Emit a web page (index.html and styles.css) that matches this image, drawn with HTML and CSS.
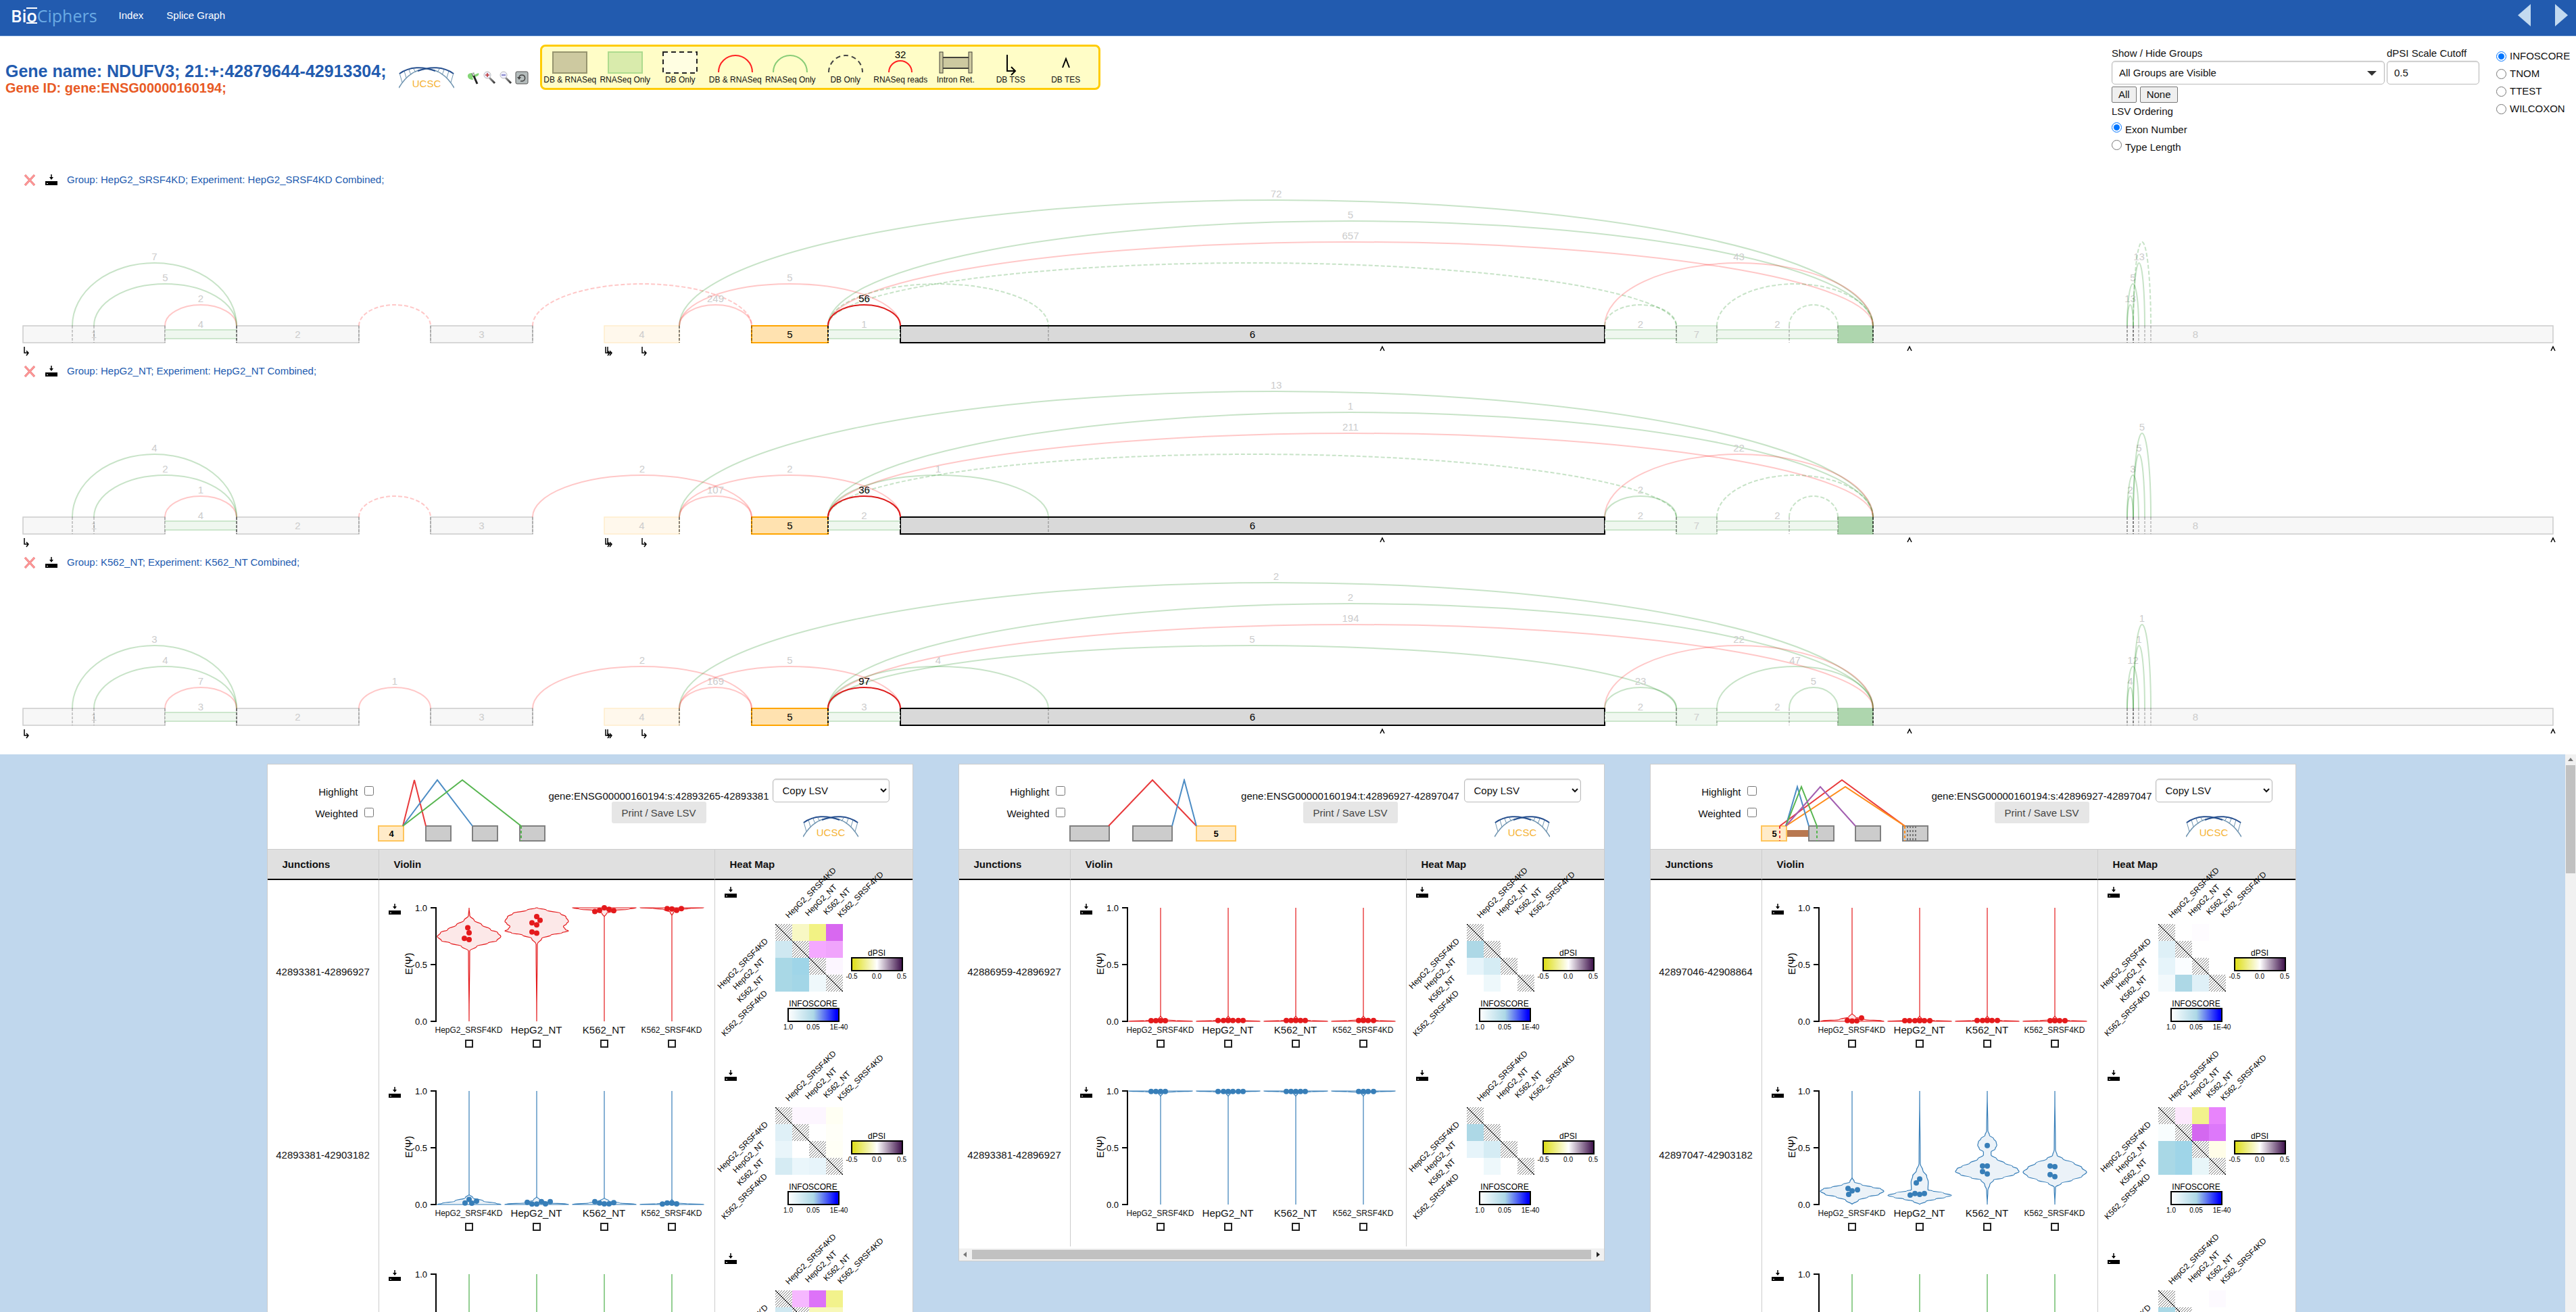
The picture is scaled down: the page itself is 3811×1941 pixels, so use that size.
FILE: index.html
```html
<!DOCTYPE html>
<html lang="en">
<head>
<meta charset="utf-8">
<title>NDUFV3 - BioCiphers Splice Graph</title>
<link rel="stylesheet" href="styles.css">
</head>
<body>
<svg class="defs" width="0" height="0" aria-hidden="true">
  <defs>
    <pattern id="hatch" width="4" height="4" patternUnits="userSpaceOnUse">
      <path d="M-1,1l2,-2M0,4l4,-4M3,5l2,-2" stroke="#777" stroke-width="1"/>
    </pattern>
    <linearGradient id="dpsi-scale">
      <stop offset="0" stop-color="#dddd10"/><stop offset=".5" stop-color="#fff"/><stop offset="1" stop-color="#3b0d48"/>
    </linearGradient>
    <linearGradient id="info-scale">
      <stop offset="0" stop-color="#fff"/><stop offset=".5" stop-color="#add8e6"/><stop offset=".95" stop-color="#00f"/>
    </linearGradient>
    <linearGradient id="lens-handle" x2="1" y2="1">
      <stop offset="0" stop-color="#999"/><stop offset="1" stop-color="#333"/>
    </linearGradient>
    <symbol id="download" viewBox="0 0 18 16">
      <path d="M9,0v5" stroke="#000" stroke-width="1.5"/><path d="M6,4h6l-3,4z"/>
      <rect x="0" y="10" width="18" height="6"/><rect x="2" y="13" width="2" height="1" fill="#fff"/>
    </symbol>
    <symbol id="cross" viewBox="0 0 18 17">
      <path d="M2,1L16,16M16,1L2,16" stroke="#d66" stroke-width="3"/>
      <path d="M2,1L16,16M16,1L2,16" stroke="#f99" stroke-width="2"/>
    </symbol>
    <symbol id="ucsc" viewBox="0 0 82 33">
      <g fill="none" stroke="#6f94b0">
        <path d="M0,32C12,12 27,4 42,4" stroke-width="1.5"/><path d="M82,32C70,12 55,4 40,4" stroke-width="1.5"/>
        <path d="M1,10l4,14M8,7l3,10M15,5l3,8M22,4l3,5M81,10l-4,14M74,7l-3,10M67,5l-3,8M60,4l-3,5"/>
      </g>
      <path d="M1,11C16,0 36,0 54,7M81,11C66,0 46,0 28,7" fill="none" stroke="#27508f" stroke-width="2"/>
      <text x="41" y="31" text-anchor="middle" class="ucsc-word">UCSC</text>
    </symbol>
  </defs>
</svg>

<header class="topbar">
  <a href="#" class="logo"><b>Bi<span class="ring">o</span></b>Ciphers</a>
  <nav><a href="#">Index</a><a href="#">Splice Graph</a></nav>
  <div class="pager">
    <button aria-label="Previous gene"><svg width="19" height="33"><path d="M19,0V33L0,16.500z"/></svg></button>
    <button aria-label="Next gene"><svg width="19" height="33"><path d="M0,0V33L19,16.500z"/></svg></button>
  </div>
</header>

<section class="gene">
  <div class="title">
    <h1>Gene name: NDUFV3; 21:+:42879644-42913304;</h1>
    <h2>Gene ID: gene:ENSG00000160194;</h2>
  </div>
  <a href="#" class="ucsc-link" aria-label="UCSC genome browser"><svg width="82" height="33"><use href="#ucsc"/></svg></a>
  <div class="tools">
    <button aria-label="Toggle scale"><svg width="20" height="20" viewBox="0 0 20 20"><path d="M2,6c3,-5 7,-1 10,-4l-1,4l7,-3c2,4 -4,6 -9,6l1,4c-4,0 -8,-2 -8,-5z" fill="#6c5" opacity=".8"/><path d="M9,3l7,16" stroke="#222" stroke-width="3"/><path d="M9,3l2,4" stroke="#ddd" stroke-width="2"/></svg></button>
    <button aria-label="Zoom in"><svg width="20" height="20" viewBox="0 0 20 20"><path d="M10,10l8,8" stroke="url(#lens-handle)" stroke-width="3"/><circle cx="7" cy="6" r="5" fill="#eef" stroke="#bbb"/><path d="M4,6h6M7,3v6" stroke="#b33" stroke-width="1.500"/></svg></button>
    <button aria-label="Zoom out"><svg width="20" height="20" viewBox="0 0 20 20"><path d="M10,10l8,8" stroke="url(#lens-handle)" stroke-width="3"/><circle cx="7" cy="6" r="5" fill="#eef" stroke="#bbb"/><path d="M4,6h6" stroke="#66b" stroke-width="1.500"/></svg></button>
    <button aria-label="Reset zoom"><svg width="20" height="20" viewBox="0 0 20 20"><rect x="1" y="1" width="18" height="18" rx="2" fill="#b4bcbc" stroke="#555"/><path d="M8,15h3c5,-1 5,-9 -1,-9c-3,0 -4,2 -4,4" fill="none" stroke="#444" stroke-width="1.500"/><path d="M3,9h6l-3,4z" fill="#444"/></svg></button>
  </div>
  <div class="legend">
    <div><svg viewBox="0 0 60 42"><rect x="5" y="8" width="50" height="31" fill="#cdc9a0" stroke="#96946f" stroke-width="2"/></svg>DB &amp; RNASeq</div>
    <div><svg viewBox="0 0 60 42"><rect x="5" y="8" width="50" height="31" fill="#d9ebac" stroke="#addb8e" stroke-width="2"/></svg>RNASeq Only</div>
    <div><svg viewBox="0 0 60 42"><rect x="5" y="8" width="50" height="31" fill="#fffee2" stroke="#222" stroke-width="2" stroke-dasharray="7 5"/></svg>DB Only</div>
    <div><svg viewBox="0 0 60 42"><path d="M5,38A25,25 0 0 1 55,38" fill="none" stroke="#f22" stroke-width="2"/></svg>DB &amp; RNASeq</div>
    <div><svg viewBox="0 0 60 42"><path d="M5,38A25,25 0 0 1 55,38" fill="none" stroke="#8c7" stroke-width="2"/></svg>RNASeq Only</div>
    <div><svg viewBox="0 0 60 42"><path d="M5,38A25,25 0 0 1 55,38" fill="none" stroke="#444" stroke-width="2" stroke-dasharray="7 5"/></svg>DB Only</div>
    <div><svg viewBox="0 0 60 42"><path d="M13,38A17,17 0 0 1 47,38" fill="none" stroke="#f22" stroke-width="2"/><text x="30" y="17" text-anchor="middle" class="reads">32</text></svg>RNASeq reads</div>
    <div><svg viewBox="0 0 60 42"><g fill="#cdc9a0" stroke="#44433a"><rect x="8" y="16" width="44" height="16" stroke-width="2"/><rect x="6" y="8" width="5" height="31"/><rect x="49" y="8" width="5" height="31"/></g></svg>Intron Ret.</div>
    <div><svg viewBox="0 0 60 42"><path d="M25,12V36H36M31,30l6,6l-6,6" fill="none" stroke="#000" stroke-width="2"/></svg>DB TSS</div>
    <div><svg viewBox="0 0 60 42"><path d="M25,31L30,18L35,31" fill="none" stroke="#000" stroke-width="2"/></svg>DB TES</div>
  </div>
  <form class="filters">
    <div class="main-filters">
      <div class="fields">
        <div class="field wide"><label for="groups">Show / Hide Groups</label>
          <div class="select-box"><select id="groups"><option>All Groups are Visible</option></select></div></div>
        <div class="field"><label for="cutoff">dPSI Scale Cutoff</label><input type="text" id="cutoff" value="0.5"></div>
      </div>
      <div class="pick"><button type="button">All</button><button type="button">None</button></div>
      <div class="ordering-title">LSV Ordering</div>
      <label class="order"><input type="radio" name="order" checked><span>Exon Number</span></label>
      <label class="order"><input type="radio" name="order"><span>Type Length</span></label>
    </div>
    <div class="stats">
      <label><input type="radio" name="stat" checked>INFOSCORE</label>
      <label><input type="radio" name="stat">TNOM</label>
      <label><input type="radio" name="stat">TTEST</label>
      <label><input type="radio" name="stat">WILCOXON</label>
    </div>
  </form>
</section>

<main class="graphs">
  <section class="graph">
    <div class="graph-head"><button aria-label="Remove"><svg width="18" height="17"><use href="#cross"/></svg></button><button aria-label="Download"><svg width="18" height="16"><use href="#download"/></svg></button><p>Group: HepG2_SRSF4KD; Experiment: HepG2_SRSF4KD Combined;</p></div>
    <svg class="splice"></svg>
  </section>
  <section class="graph">
    <div class="graph-head"><button aria-label="Remove"><svg width="18" height="17"><use href="#cross"/></svg></button><button aria-label="Download"><svg width="18" height="16"><use href="#download"/></svg></button><p>Group: HepG2_NT; Experiment: HepG2_NT Combined;</p></div>
    <svg class="splice"></svg>
  </section>
  <section class="graph">
    <div class="graph-head"><button aria-label="Remove"><svg width="18" height="17"><use href="#cross"/></svg></button><button aria-label="Download"><svg width="18" height="16"><use href="#download"/></svg></button><p>Group: K562_NT; Experiment: K562_NT Combined;</p></div>
    <svg class="splice"></svg>
  </section>
</main>

<div class="lsv-panel">
  <div class="cards">
    <article class="card">
      <div class="card-head">
        <div class="toggles"><label>Highlight<input type="checkbox"></label><label>Weighted<input type="checkbox"></label></div>
        <svg class="cartoon" viewBox="0 0 250 94" width="250" height="94">
          <g class="exon"><rect x="71" y="70" width="37" height="22"/><rect x="140" y="70" width="37" height="22"/><rect x="210" y="70" width="37" height="22"/></g>
          <rect class="ref" x="1" y="70" width="37" height="22"/><text x="20" y="86">4</text>
          <path class="red" d="M37,70L54,2L71,70"/><path class="blue" d="M37,70L88,2L140,70"/><path class="green" d="M37,70L125,2L212,70"/>
          <path class="green" stroke-dasharray="4 3" d="M212,70V92"/>
        </svg>
        <div class="lsv-id"><span>gene:ENSG00000160194:s:42893265-42893381</span><button>Print / Save LSV</button></div>
        <div class="lsv-copy"><select aria-label="Copy LSV"><option>Copy LSV</option></select><a href="#" aria-label="UCSC genome browser"><svg width="82" height="33"><use href="#ucsc"/></svg></a></div>
      </div>
      <table><thead><tr><th>Junctions</th><th>Violin</th><th>Heat Map</th></tr></thead><tbody></tbody></table>
    </article>
    <article class="card">
      <div class="card-head">
        <div class="toggles"><label>Highlight<input type="checkbox"></label><label>Weighted<input type="checkbox"></label></div>
        <svg class="cartoon" viewBox="0 0 250 94" width="250" height="94">
          <g class="exon"><rect x="1" y="70" width="58" height="22"/><rect x="94" y="70" width="58" height="22"/></g>
          <rect class="ref" x="188" y="70" width="58" height="22"/><text x="217" y="86">5</text>
          <path class="red" d="M58,70L123,2L188,70"/><path class="blue" d="M152,70L170,2L188,70"/>
        </svg>
        <div class="lsv-id"><span>gene:ENSG00000160194:t:42896927-42897047</span><button>Print / Save LSV</button></div>
        <div class="lsv-copy"><select aria-label="Copy LSV"><option>Copy LSV</option></select><a href="#" aria-label="UCSC genome browser"><svg width="82" height="33"><use href="#ucsc"/></svg></a></div>
      </div>
      <table><thead><tr><th>Junctions</th><th>Violin</th><th>Heat Map</th></tr></thead><tbody></tbody></table>
      <div class="hbar"><i class="left"></i><i class="thumb"></i><i class="right"></i></div>
    </article>
    <article class="card">
      <div class="card-head">
        <div class="toggles"><label>Highlight<input type="checkbox"></label><label>Weighted<input type="checkbox"></label></div>
        <svg class="cartoon" viewBox="0 0 250 94" width="250" height="94">
          <rect x="38" y="76" width="33" height="10" fill="#b87850"/>
          <g class="exon"><rect x="71" y="70" width="37" height="22"/><rect x="140" y="70" width="37" height="22"/><rect x="210" y="70" width="37" height="22"/></g>
          <rect class="ref" x="1" y="70" width="37" height="22"/><text x="20" y="86">5</text>
          <path class="red" d="M28,70L120,2L213,70"/><path class="orange" d="M37,70L125,12L213,70"/><path class="blue" d="M37,70L54,12L71,70"/><path class="green" d="M37,70L60,12L83,70"/><path class="purple" d="M37,70L88,12L140,70"/>
          <path class="red" stroke-dasharray="4 3" d="M28,70V92"/><path class="green" stroke-dasharray="4 3" d="M83,70V92"/><path class="orange" stroke-dasharray="4 3" d="M213,70V92"/>
          <path stroke="#777" stroke-dasharray="3 3" d="M217,70V92M221,70V92M225,70V92M229,70V92"/>
        </svg>
        <div class="lsv-id"><span>gene:ENSG00000160194:s:42896927-42897047</span><button>Print / Save LSV</button></div>
        <div class="lsv-copy"><select aria-label="Copy LSV"><option>Copy LSV</option></select><a href="#" aria-label="UCSC genome browser"><svg width="82" height="33"><use href="#ucsc"/></svg></a></div>
      </div>
      <table><thead><tr><th>Junctions</th><th>Violin</th><th>Heat Map</th></tr></thead><tbody></tbody></table>
    </article>
  </div>
  <div class="vbar"><i class="up"></i><i class="thumb"></i></div>
</div>
<script src="plots.js"></script>
</body>
</html>
```
FILE: styles.css
```css
* { box-sizing: border-box; }
html, body { height: 100%; }
body {
  margin: 0;
  display: flex;
  flex-direction: column;
  overflow: hidden;
  background: #fff;
  color: #111;
  font: 15px/18px "Liberation Sans", Arial, sans-serif;
}
button, select, input { font: inherit; color: inherit; }
button { padding: 0; cursor: pointer; }
h1, h2, p { margin: 0; }
svg { display: block; flex: none; }
.defs { position: absolute; }
.ucsc-word { font: 15px "Liberation Sans", sans-serif; fill: #f5b335; stroke: none; }

/* top bar */
.topbar {
  flex: none;
  display: flex;
  align-items: center;
  height: 54px;
  padding: 0 12px 8px 16px;
  background: #225baf;
  border-bottom: 1px solid #c9dcf2;
}
.logo { color: #6aaae4; font: 25px/30px "Open Sans", sans-serif; text-decoration: none; }
.logo b { color: #fff; font-weight: 600; }
.ring { border-top: 2px solid #fff; border-bottom: 2px solid #fff; line-height: 20px; display: inline-block; }
.topbar nav { display: flex; gap: 34px; margin-left: 32px; }
.topbar nav a { color: #fff; text-decoration: none; }
.pager { display: flex; gap: 36px; margin-left: auto; }
.pager button { border: 0; background: none; }
.pager svg { fill: #c3daf0; }

/* gene summary */
.gene { flex: none; display: flex; align-items: flex-start; height: 202px; padding-top: 12px; }
.title { padding: 25px 0 0 8px; }
h1 { font-size: 25px; line-height: 28px; color: #225baf; }
h2 { font-size: 20px; line-height: 22px; color: #e85a25; }
.ucsc-link { margin: 32px 0 0 18px; }
.tools { display: flex; gap: 4px; margin: 39px 0 0 18px; }
.tools button { border: 0; background: none; }
.legend {
  flex: none;
  display: grid;
  grid-template-columns: repeat(10, 1fr);
  width: 829px;
  margin-left: 17px;
  padding: 0 7px 5px 1px;
  border: 3px solid #fc0;
  border-radius: 8px;
  background: #fffdc7;
  font-size: 12px;
  line-height: 14px;
  text-align: center;
  white-space: nowrap;
}
.legend > div { display: flex; flex-direction: column; align-items: center; }
.legend svg { width: 60px; height: 42px; overflow: visible; }
.reads { font-size: 15px; }

/* filters */
.filters { display: flex; gap: 25px; margin-left: auto; padding-top: 4px; width: 687px; }
.main-filters { flex: 1; display: flex; flex-direction: column; }
.fields { display: flex; gap: 3px; }
.field { display: flex; flex-direction: column; gap: 2px; width: 137px; }
.field.wide { flex: 1; }
.field input, .select-box select, .lsv-copy select {
  width: 100%;
  height: 35px;
  padding: 0 10px;
  border: 1px solid #bbb;
  border-radius: 5px;
  background: #fff;
  box-shadow: inset 0 1px 2px #ddd;
}
.select-box { position: relative; }
.select-box select { appearance: none; }
.select-box::after {
  content: "";
  position: absolute;
  right: 12px;
  top: 15px;
  border: 7px solid transparent;
  border-top-color: #333;
  border-bottom: 0;
}
.pick { display: flex; gap: 5px; margin-top: 3px; }
.pick button { height: 24px; padding: 0 9px; border: 1px solid #767676; border-radius: 2px; background: #efefef; }
.ordering-title { margin: 4px 0 7px; }
input[type=radio] { width: 15px; height: 15px; margin: 0; }
.order { display: flex; gap: 5px; height: 26px; }
.order span { padding-top: 2px; }
.stats { width: 118px; }
.stats label { display: flex; align-items: center; gap: 5px; height: 26px; }

/* splice graphs */
.graphs { flex: none; padding-bottom: 11px; }
.graph-head { display: flex; align-items: center; height: 20px; padding-left: 35px; color: #225baf; }
.graph-head button { border: 0; background: none; margin-right: 14px; color: #000; }
.splice { width: 100%; height: 263px; overflow: visible; }
.splice text { font-size: 15px; text-anchor: middle; fill: #ccc; }
.splice text.on { fill: #000; }

/* LSV cards */
.lsv-panel { flex: 1; min-height: 0; display: flex; overflow: hidden; background: #c0d7ed; }
.cards { flex: 1; display: flex; flex-wrap: wrap; justify-content: center; align-items: flex-start; gap: 67px; padding: 14px 4px 0 0; }
.card { width: 956px; background: #fff; border: 1px solid #ccc; }
.card-head { display: flex; height: 125px; }
.toggles { width: 157px; display: flex; flex-direction: column; gap: 15px; padding-top: 32px; }
.toggles label { display: flex; justify-content: flex-end; align-items: baseline; gap: 9px; line-height: 17px; }
.toggles input { width: 14px; height: 14px; margin: 0; }
.cartoon { margin: 21px 3px 0 6px; }
.cartoon path { fill: none; stroke-width: 2; }
.cartoon .exon rect { fill: #ccc; stroke: #808080; stroke-width: 2; }
.cartoon .ref { fill: #ffebc9; stroke: #ffc55c; stroke-width: 2; }
.cartoon text { font-size: 13px; font-weight: bold; text-anchor: middle; }
.red { stroke: #e83a3c; }
.blue { stroke: #4c8cc4; }
.green { stroke: #57b550; }
.purple { stroke: #a35fb0; }
.orange { stroke: #ff8c1a; }
.lsv-id { width: 326px; display: flex; flex-direction: column; align-items: center; padding-top: 38px; line-height: 17px; white-space: nowrap; }
.lsv-id button { width: 140px; height: 32px; border: 0; border-radius: 3px; background: #e6e6e6; color: #444; }
.lsv-copy { width: 173px; margin-left: 5px; padding-top: 21px; display: flex; flex-direction: column; align-items: center; gap: 19px; }
table { width: 100%; border-collapse: separate; border-spacing: 0; table-layout: fixed; }
th { height: 46px; padding: 0 0 0 22px; text-align: left; background: #e0e0e0; border-top: 1px solid #ccc; border-bottom: 2px solid #000; }
th:nth-child(1) { width: 164px; }
th:nth-child(2) { width: 497px; }
td { height: 271px; padding: 0; vertical-align: top; }
th + th, td + td { border-left: 1px solid #ccc; }
td.junction { text-align: center; vertical-align: middle; }
.violin, .heat { overflow: visible; }
.violin text { font-size: 13px; text-anchor: end; }
.violin text.axis-title { font-size: 15px; text-anchor: start; }
.violin-labels { display: grid; grid-template-columns: repeat(4, 100px); margin-left: 83px; }
.violin-labels label { display: flex; flex-direction: column; align-items: center; gap: 5px; white-space: nowrap; }
.violin-labels .long { font-size: 12px; }
.violin-labels input { appearance: none; width: 12px; height: 12px; margin: 0; border: 2px solid #222; background: #fff; }
.heat text { font-size: 12px; }
.heat .mid { text-anchor: middle; }
.heat .end { text-anchor: end; }
.heat .tick { font-size: 10px; text-anchor: middle; }

/* scrollbars */
.hbar, .vbar { display: flex; background: #f1f1f1; }
.hbar { height: 18px; margin-top: 3px; align-items: center; padding: 0 6px; gap: 8px; }
.vbar { flex: none; width: 16px; flex-direction: column; align-items: center; padding-top: 5px; gap: 6px; }
.hbar .thumb { flex: 1; height: 14px; background: #c1c1c1; }
.vbar .thumb { width: 14px; height: 160px; background: #c1c1c1; }
.left, .right, .up { border: 4px solid transparent; }
.left { border-right: 5px solid #777; border-left: 0; }
.right { border-left: 5px solid #222; border-right: 0; }
.up { border-bottom: 5px solid #777; border-top: 0; }
```
FILE: plots.js
```js
// ---------- splice graphs ----------
const GENE_SPAN = 3811;
const BASE = 206, EXON_H = 25, STEP = 31;
const EXONS = [
  [34, 244, '1', '#f7f7f7', '#ccc'], [350, 531, '2', '#f7f7f7', '#ccc'], [637, 788, '3', '#f7f7f7', '#ccc'],
  [894, 1005, '4', '#fff8ec', '#ffedcc'], [2719, 3777, '8', '#f7f7f7', '#ccc'],
  [2480, 2540, '7', '#eff7ef', '#cce5cc'], [1112, 1225, '5', '#ffe2b0', '#ffa500', 1], [1332, 2374, '6', '#d9d9d9', '#000', 1]
];
const INTRONS = [[244, 350], [1225, 1332], [2374, 2480], [2540, 2719]];
// start, end, level, colour, reads per group ('' = annotated only, drawn dashed)
const JUNCTIONS = [
  [107, 350, 3, 'g', '7', '4', '3'], [139, 350, 2, 'g', '5', '2', '4'], [244, 350, 1, 'r', '2', '1', '7'],
  [531, 637, 1, 'r', '', '', '1'], [788, 1112, 2, 'r', '', '2', '2'], [1005, 1112, 1, 'r', '249', '107', '169'],
  [1005, 1332, 2, 'r', '5', '2', '5'], [1005, 2771, 6, 'g', '72', '13', '2'], [1225, 2771, 5, 'g', '5', '1', '2'],
  [1225, 2771, 4, 'r', '657', '211', '194'], [1225, 2480, 3, 'g', '', '', '5'], [1225, 1551, 2, 'g', '', '1', '4'],
  [2374, 2771, 3, 'r', '43', '22', '22'], [2374, 2480, 1, 'g', '', '2', '23'], [2540, 2771, 2, 'g', '', '', '47'],
  [2647, 2719, 1, 'g', '', '', '5'], [3147, 3156, 1, 'g', '13', '2', '4'], [3147, 3164, 2, 'g', '5', '3', '12'],
  [3156, 3173, 3, 'g', '13', '5', '1'], [3156, 3182, 4, 'g', '', '5', '1'], [1225, 1332, 1, 'on', '56', '36', '97']
];
const INTRON_READS = [['4', '1', '2', '2'], ['4', '2', '2', '2'], ['3', '3', '2', '2']];
const STROKE = { g: 'rgba(0,128,0,.22)', r: 'rgba(255,0,0,.22)', on: '#dd1c1c' };

function drawSplice(svg, group) {
  const k = svg.clientWidth / GENE_SPAN;
  let out = '';
  EXONS.forEach(([a, b, name, fill, stroke, on]) => {
    out += `<rect x="${a * k}" y="${BASE}" width="${(b - a) * k}" height="${EXON_H}" fill="${fill}" stroke="${stroke}" stroke-width="${on ? 2 : 1.5}"/>`;
    out += `<text class="${on ? 'on' : ''}" x="${(a + b) / 2 * k}" y="${BASE + 18}">${name}</text>`;
  });
  out += `<rect x="${2719 * k}" y="${BASE}" width="${52 * k}" height="${EXON_H}" fill="#aed6ae" stroke="#9c9"/>`;
  INTRONS.forEach(([a, b], i) => {
    out += `<rect x="${a * k}" y="${BASE + 6}" width="${(b - a) * k}" height="13" fill="#eff7ef"/>`;
    out += `<path d="M${a * k},${BASE + 6}H${b * k}M${a * k},${BASE + 19}H${b * k}" stroke="#cce6cc" stroke-width="2"/>`;
    out += `<text x="${(a + b) / 2 * k}" y="${BASE + 3}">${INTRON_READS[group][i]}</text>`;
  });
  JUNCTIONS.forEach(([a, b, level, kind, ...reads]) => {
    const r = reads[group], on = kind === 'on', h = level * STEP, rx = (b - a) / 2 * k;
    out += `<path d="M${a * k},${BASE}A${rx},${h} 0 0 1 ${b * k},${BASE}" fill="none" stroke="${STROKE[kind]}" stroke-width="2" ${r ? '' : 'stroke-dasharray="6 3"'}/>`;
    out += `<path d="M${a * k},${BASE}v${EXON_H}M${b * k},${BASE}v${EXON_H}" stroke="#000" stroke-opacity="${on ? 1 : .25}" stroke-width="1.5" stroke-dasharray="4 2"/>`;
    if (r) out += `<text class="${on ? 'on' : ''}" x="${(a + b) / 2 * k}" y="${BASE - h - 4}">${r}</text>`;
  });
  [36, 896, 899, 950].forEach(x => {
    out += `<path d="M${x * k},237v9h5m-2,-3l3,3l-3,4" fill="none" stroke="#000" stroke-width="1.5"/>`;
  });
  [2045, 2825, 3777].forEach(x => {
    out += `<path d="M${x * k - 3},243l3,-6l3,6" fill="none" stroke="#000" stroke-width="1.5"/>`;
  });
  svg.innerHTML = out;
}
function drawAll() { document.querySelectorAll('.splice').forEach(drawSplice); }
drawAll();
window.addEventListener('resize', drawAll);

// ---------- violins ----------
const GROUPS = ['HepG2_SRSF4KD', 'HepG2_NT', 'K562_NT', 'K562_SRSF4KD'];
const Y1 = 41, Y0 = 209, HALF = 47;
const yOf = psi => Y0 - psi * (Y0 - Y1);
const LOW = [[1, 0], [.05, 0], [.015, .08], [.006, .5], [.003, 1], [0, 1]];
const HIGH = LOW.map(([p, w]) => [1 - p, w]).reverse();
const LINE = [[1, 0], [0, 0]];
const row = (xs, p) => xs.map(x => [x, p]);

function violin(cx, profile, dots, colour) {
  const side = s => profile.map(([p, w]) => [cx + s * (w > .01 ? w : 0) * HALF, yOf(p)]);
  const smooth = pts => pts.slice(1).map((p, i) => {
    const q = pts[i], m = (q[1] + p[1]) / 2;
    return `C${q[0]},${m} ${p[0]},${m} ${p[0]},${p[1]}`;
  }).join('');
  const right = side(1), left = side(-1).reverse();
  return `<path d="M${right[0]}${smooth(right)}L${left[0]}${smooth(left)}Z" fill="${colour}" fill-opacity=".1" stroke="${colour}" stroke-width="1.2"/>` +
    dots.map(([x, p]) => `<circle cx="${cx + x}" cy="${yOf(p)}" r="4" fill="${colour}"/>`).join('');
}
function violinCell(data, colour) {
  let s = `<svg class="violin" width="496" height="213"><use href="#download" x="14" y="35" width="18" height="16"/>`;
  s += `<path d="M76,${Y1}h8V${Y0}h-8M76,${(Y0 + Y1) / 2}h8" fill="none" stroke="#000" stroke-width="2"/>`;
  s += `<text x="71" y="${Y1 + 5}">1.0</text><text x="71" y="${(Y0 + Y1) / 2 + 5}">0.5</text><text x="71" y="${Y0 + 5}">0.0</text>`;
  s += `<text class="axis-title" transform="translate(49 140) rotate(-90)">E(Ψ)</text>`;
  data.forEach(([profile, dots], i) => { s += violin(133 + i * 100, profile, dots, colour); });
  s += '</svg><div class="violin-labels">';
  GROUPS.forEach(g => { s += `<label><span class="${g.length > 10 ? 'long' : ''}">${g}</span><input type="checkbox"></label>`; });
  return s + '</div>';
}

// ---------- heat maps ----------
const COLS = [[109, 57], [138, 54], [165, 52], [186, 56]];
const ROWS = [[79, 91], [74, 120], [73, 146], [78, 168]];
function heatCell(m) {
  let s = '<svg class="heat" width="293" height="250"><use href="#download" x="14" y="10" width="18" height="16"/>';
  m.forEach((colour, i) => {
    const r = Math.floor(i / 4), c = i % 4;
    s += `<rect x="${89 + c * 25}" y="${65 + r * 25}" width="25" height="25" fill="${r === c ? 'url(#hatch)' : colour}"/>`;
  });
  s += '<path d="M89,65l100,100" stroke="#000"/>';
  GROUPS.forEach((g, i) => {
    s += `<text transform="translate(${COLS[i]}) rotate(-45)">${g}</text>`;
    s += `<text class="end" transform="translate(${ROWS[i]}) rotate(-45)">${g}</text>`;
  });
  s += '<text class="mid" x="239" y="112">dPSI</text><rect x="202" y="115" width="75" height="19" fill="url(#dpsi-scale)" stroke="#000" stroke-width="2"/>';
  s += '<text class="tick" x="202" y="146">-0.5</text><text class="tick" x="239" y="146">0.0</text><text class="tick" x="276" y="146">0.5</text>';
  s += '<text class="mid" x="145" y="187">INFOSCORE</text><rect x="108" y="190" width="75" height="19" fill="url(#info-scale)" stroke="#000" stroke-width="2"/>';
  s += '<text class="tick" x="108" y="221">1.0</text><text class="tick" x="145" y="221">0.05</text><text class="tick" x="183" y="221">1E-40</text>';
  return s + '</svg>';
}

const W = '#fff', RED = '#e41a1c', BLUE = '#377eb8', GREEN = '#4daf4a';
const THIN = GROUPS.map(() => [LINE, []]);
const CARDS = [
  [
    ['42893381-42896927', RED, [
      [[[1, .01], [.93, .02], [.89, .16], [.85, .4], [.81, .67], [.78, .9], [.747, 1], [.71, .87], [.69, .6], [.66, .24], [.62, .02], [0, .01]], [[-2, .824], [0, .78], [-7, .73], [0, .72]]],
      [[[1, .02], [.98, .3], [.95, .75], [.92, .92], [.88, 1], [.86, .94], [.835, .84], [.81, .9], [.796, 1], [.78, .8], [.76, .45], [.73, .16], [.68, .02], [0, .01]], [[0, .922], [5, .89], [-7, .868], [0, .85], [-7, .787], [0, .777]]],
      [[[1, 1], [.99, .8], [.975, .3], [.95, .07], [.92, .01], [0, .01]], [[-14, .968], [-7, .978], [0, 1], [7, .986], [14, .974]]],
      [[[1, 1], [.995, .6], [.985, .25], [.96, .05], [.93, .01], [0, .01]], [[-7, .992], [0, .99], [7, .978], [14, .992]]]
    ], ['', '#f8f8c4', '#f2f284', '#d868f0', '#cfe8f1', '', '#f4a8ff', '#f0a4fc', '#a9d8e6', '#9fd5e8', '', '#fcf6ff', '#a9d8e6', '#a3d6e7', '#eff8fb', '']],
    ['42893381-42903182', BLUE, [
      [[[1, .01], [.09, .01], [.06, .12], [.03, .45], [.01, .85], [0, 1]], [[-6, .014], [0, .045], [4, .012], [11, .03]]],
      [[[1, .01], [.07, .01], [.04, .1], [.015, .35], [.004, .95], [0, 1]], [[-14, .02], [-7, .004], [0, .004], [7, .025], [13, .006], [20, .025]]],
      [[[1, .01], [.06, .01], [.03, .15], [.012, .5], [.004, .95], [0, 1]], [[-14, .025], [-7, .014], [0, .006], [7, .006], [14, .016]]],
      [LOW, [[-14, .004], [-7, .014], [0, .012], [7, .006]]]
    ], ['', '#fdf6ff', '#fdf6ff', '#fffff3', '#dff0f7', '', W, '#fffff8', '#e9f5fa', W, '', '#fffff6', '#d5ebf3', '#eaf6fb', '#e7f4fa', '']],
    ['42893381-42908864', GREEN, THIN, ['', '#f6b8ff', '#dd72f8', '#f2f28c', '#cfe8f1', '', '#f8f8b8', '#f8f8b8', '#cfe8f1', '#cfe8f1', '', W, W, W, W, '']]
  ],
  [
    ['42886959-42896927', RED, [
      [LOW, row([-14, -7, 0, 7], .006)], [LOW, row([-15, -7, 0, 7, 15, 22], .008)], [LOW, row([-14, -7, 0, 7, 14], .007)], [LOW, row([-7, 0, 7, 15], .007)]
    ], ['', W, W, W, '#add8e6', '', W, W, '#e6f4fa', '#d5ecf4', '', W, W, '#eef8fb', W, '']],
    ['42893381-42896927', BLUE, [
      [HIGH, row([-14, -7, 0, 7], .995)], [HIGH, row([-15, -7, 0, 7, 15, 22], .995)], [HIGH, row([-14, -7, 0, 7, 14], .995)], [HIGH, row([-7, 0, 7, 15], .995)]
    ], ['', W, W, W, '#add8e6', '', W, W, '#e6f4fa', '#d5ecf4', '', W, W, '#eef8fb', W, '']]
  ],
  [
    ['42897046-42908864', RED, [
      [[[1, .01], [.07, .01], [.04, .1], [.015, .4], [.004, .95], [0, 1]], [[-7, .008], [0, .003], [7, .004], [14, .03]]],
      [LOW, row([-22, -15, -7, 0, 7, 15], .006)], [LOW, row([-15, -7, 0, 7, 15], .007)], [LOW, row([-7, 0, 7, 15], .006)]
    ], ['', W, '#fefcff', W, '#def0f7', '', W, W, '#e6f4fa', '#fafdff', '', W, '#f2f9fc', '#add8e6', '#dff0f7', '']],
    ['42897047-42903182', BLUE, [
      [[[1, .01], [.24, .01], [.2, .07], [.175, .3], [.15, .65], [.14, .9], [.117, 1], [.09, .85], [.067, .5], [.038, .2], [0, .01]], [[-6, .142], [8, .13], [0, .12], [-5, .09]]],
      [[[1, .01], [.36, .02], [.3, .1], [.25, .22], [.2, .27], [.13, .26], [.12, .4], [.103, .75], [.08, 1], [.063, .8], [.048, .5], [.028, .2], [0, .01]], [[0, .224], [-5, .19], [-7, .097], [0, .089], [7, .097], [-14, .083]]],
      [[[1, .01], [.65, .02], [.61, .07], [.58, .2], [.55, .28], [.523, .3], [.49, .25], [.463, .12], [.437, .12], [.4, .3], [.364, .55], [.335, .8], [.315, .95], [.29, 1], [.265, .85], [.235, .5], [.216, .2], [.176, .08], [.127, .02], [0, .01]], [[0, .52], [-7, .339], [0, .339], [-7, .29], [0, .27]]],
      [[[1, .01], [.483, .02], [.434, .07], [.404, .25], [.364, .6], [.325, .85], [.285, 1], [.245, .85], [.216, .55], [.186, .2], [.152, .02], [0, .01]], [[-7, .34], [0, .333], [-7, .264], [0, .245]]]
    ], ['', '#fce8fc', '#f2f28c', '#e884fc', '#f8fdfe', '', '#d468f0', '#dd78fa', '#a9d8e6', '#9fd5e8', '', '#fffde8', '#a9d8e6', '#9fd5e8', '#e8f6f9', '']],
    ['42897047-42908864', GREEN, THIN, ['', W, W, '#fdfaff', '#a9d8e6', '', W, W, W, W, '', W, W, W, W, '']]
  ]
];
document.querySelectorAll('.card tbody').forEach((body, i) => {
  body.innerHTML = CARDS[i].map(([name, colour, violins, heat]) =>
    `<tr><td class="junction">${name}</td><td>${violinCell(violins, colour)}</td><td>${heatCell(heat)}</td></tr>`).join('');
});
```
